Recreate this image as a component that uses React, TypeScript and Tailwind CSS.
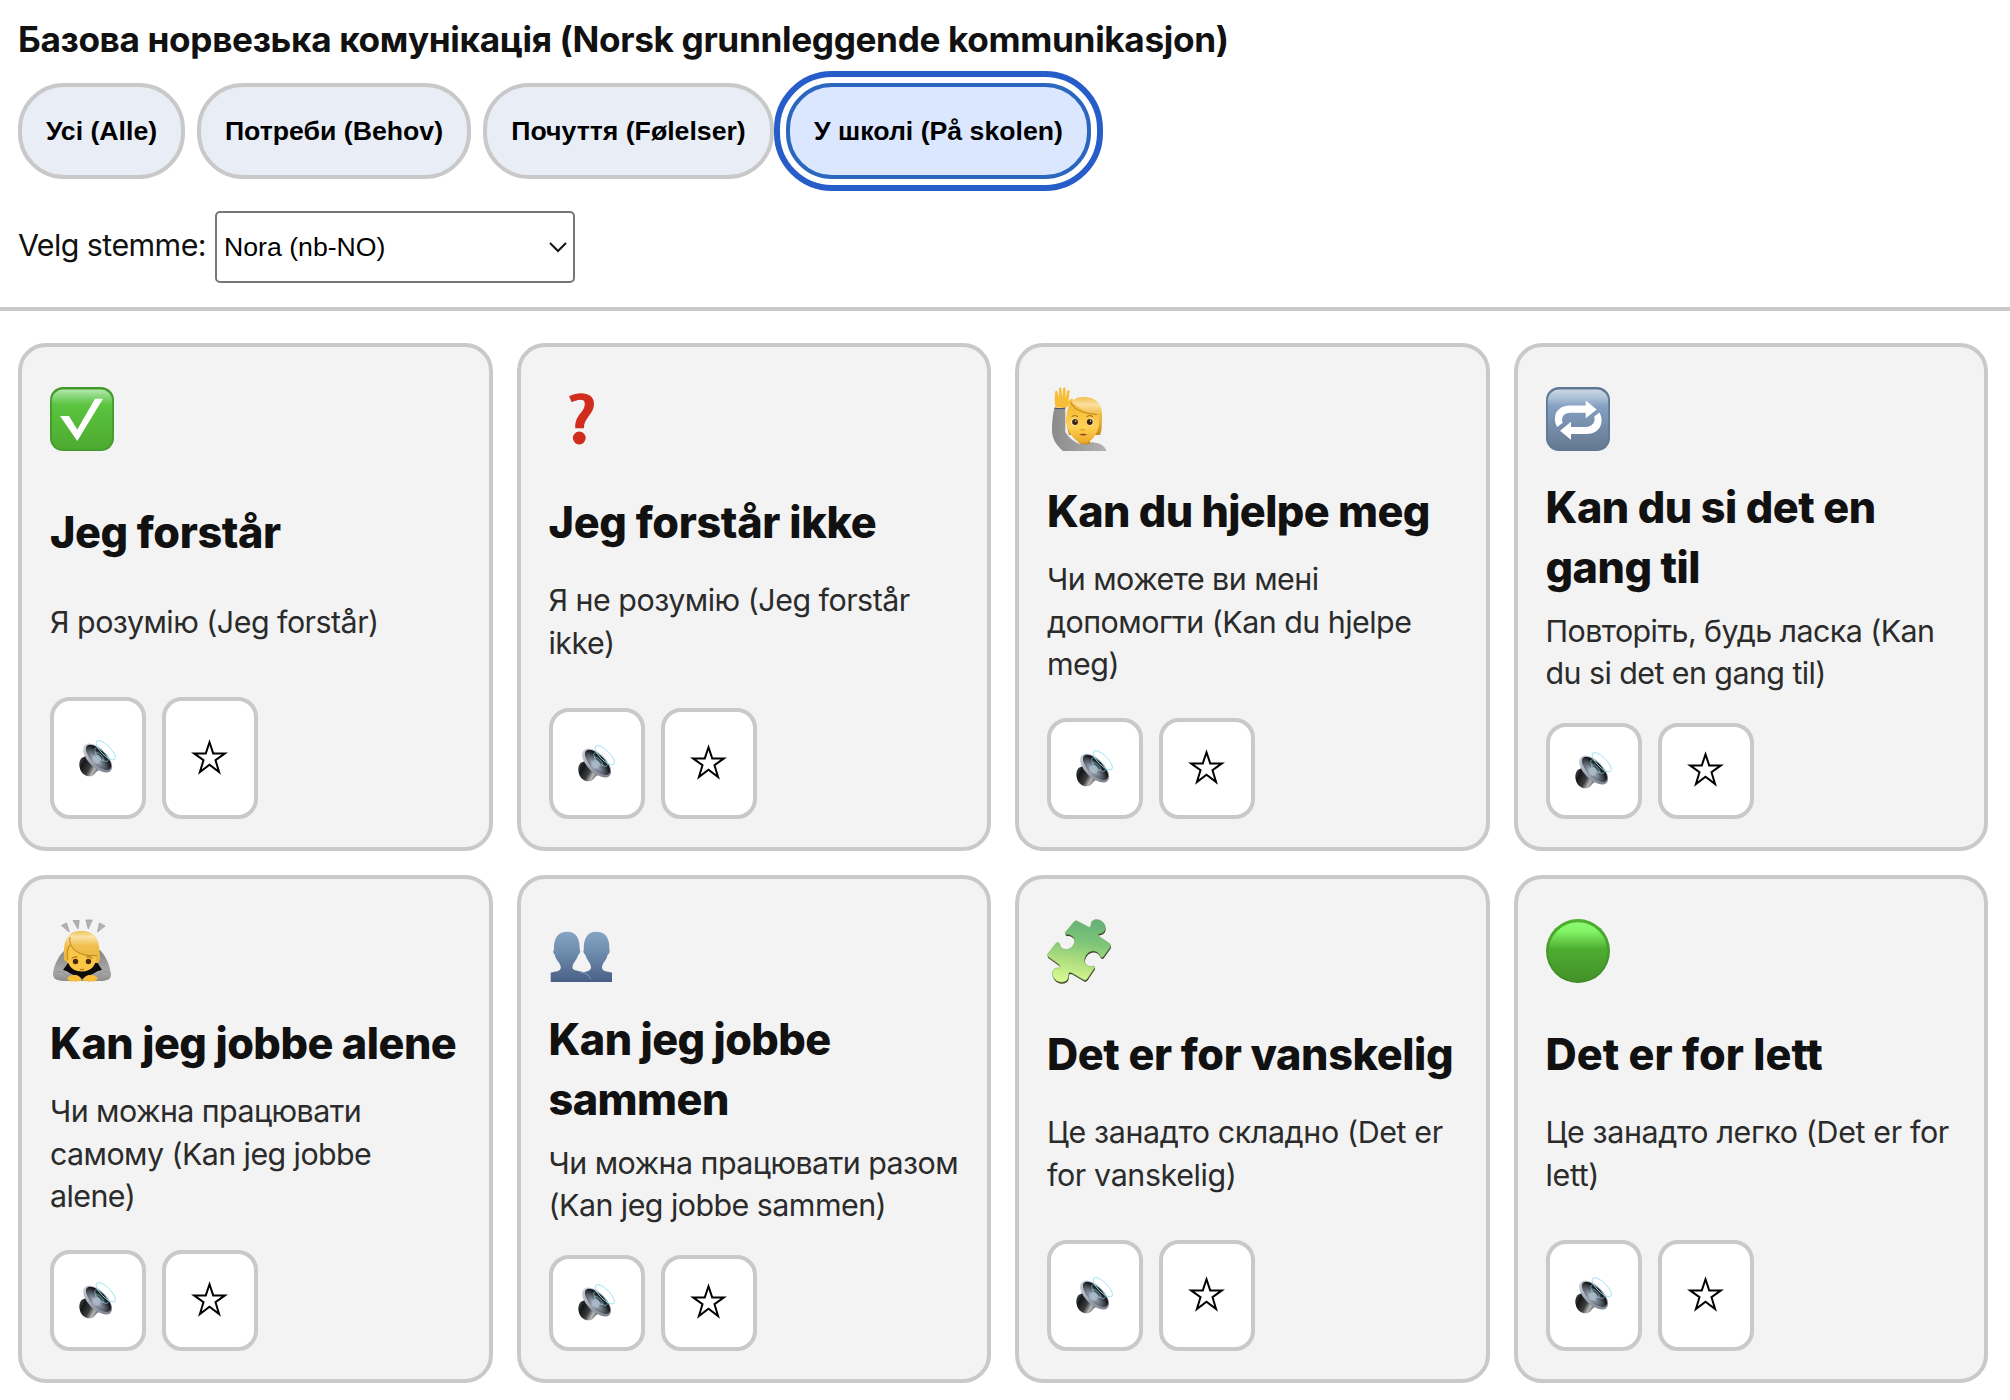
import React from "react";

const CheckIcon = () => (
  <svg className="block h-16 w-16" viewBox="0 0 64 64">
    <defs>
      <linearGradient id="chk" x1="0" y1="0" x2="0" y2="1">
        <stop offset="0" stopColor="#b4e8ae" />
        <stop offset="0.12" stopColor="#86d67a" />
        <stop offset="0.26" stopColor="#5ac43e" />
        <stop offset="1" stopColor="#4daa30" />
      </linearGradient>
    </defs>
    <rect width="64" height="64" rx="13" fill="#429a2c" />
    <rect x="1.8" y="2.4" width="60.4" height="60" rx="11.5" fill="url(#chk)" />
    <path d="M10 29h9l8.3 13.5L45 11.7h8L27.300 54z" fill="#fff" />
  </svg>
);

const QuestionIcon = () => (
  <svg className="block h-16 w-16" viewBox="0 0 64 64">
    <path
      d="M20 9.300C31 3.500 45 5.500 45 16.800C45 27.500 34.300 31.500 35 41.300H26.300C25.500 27.500 35.800 26 35.800 16.500C35.800 11.500 29 12.200 22.700 15.300Z"
      fill="#d12d1f"
    />
    <circle cx="30.300" cy="51" r="6.400" fill="#d12d1f" />
  </svg>
);

const RaiseHandIcon = () => (
  <svg className="block h-16 w-16" viewBox="0 0 64 64">
    <defs>
      <linearGradient id="rhArm" x1="0" y1="0" x2="1" y2="0">
        <stop offset="0" stopColor="#8b8b8b" />
        <stop offset="1" stopColor="#b2b2b2" />
      </linearGradient>
      <linearGradient id="rhHair" x1="0" y1="0" x2="0" y2="1">
        <stop offset="0" stopColor="#f0c04c" />
        <stop offset="0.2" stopColor="#fbe0a0" />
        <stop offset="0.45" stopColor="#f2bf49" />
        <stop offset="1" stopColor="#c98a1d" />
      </linearGradient>
      <linearGradient id="rhFace" x1="0" y1="0" x2="0" y2="1">
        <stop offset="0" stopColor="#f2b52f" />
        <stop offset="0.6" stopColor="#ffd255" />
        <stop offset="1" stopColor="#e9a524" />
      </linearGradient>
    </defs>
    <path d="M20 40C19 22 22 10 36 10C51 10 56 19 55 30C54.500 37 55.500 43 53 48H22Z" fill="url(#rhHair)" />
    <path d="M7.500 21H18.300V45C21 50 26 54 32 57C40 54 57 54 59.500 64H16C9 58 5 51 5 44C5 35 6 26 7.500 21Z" fill="url(#rhArm)" />
    <path d="M31 50h12v6.500q-6 2.500-12-1z" fill="#c98a1d" />
    <path d="M19.500 29C20 22 23 16 25 15.500C33 22 43 27 51 27.500C53.500 33 52.500 41 48.500 47.500C45 53.500 40.500 56.500 37 56.500C32 56.500 25.500 52 21.500 43C18.500 37 18.500 33 19.500 29Z" fill="url(#rhFace)" />
    <path d="M24 15C25 22 36 26.500 50 27.500" fill="none" stroke="#b87a18" strokeWidth="0.900" />
    <path d="M8.500 20.500C7.500 15 7.600 9 8.300 4.500C9 3 10.500 4 10.600 5.500L11.800 10.500L12 1.500C12.400 0 14 0 14.400 1.500L15 10L16.300 1C17 0 18.500 0.500 18.600 2L18.500 10.500L20.500 3.500C21.500 2 23 3.500 22.600 5L21.500 14C23 12.500 25 11 26 12C25.500 15 22 19 18 21Z" fill="#f8bd36" />
    <ellipse cx="27.500" cy="35" rx="3.200" ry="3.500" fill="#fff" />
    <ellipse cx="43.200" cy="35" rx="3.200" ry="3.500" fill="#fff" />
    <circle cx="28" cy="35" r="2.900" fill="#3b210b" />
    <circle cx="42.800" cy="35" r="2.900" fill="#3b210b" />
    <circle cx="28.700" cy="34" r="0.700" fill="#fff" />
    <circle cx="43.500" cy="34" r="0.700" fill="#fff" />
    <path d="M24.500 29.500q3-2 6.500 0M39.500 29.500q3.500-2 6.500 0" fill="none" stroke="#9a6512" strokeWidth="1" />
    <path d="M33.700 42.500q2 1.300 4 0" fill="none" stroke="#d18f1e" strokeWidth="1" />
    <path d="M32 47.300q4 -1.200 8.300 0q-4 2.600-8.300 0z" fill="#8b4410" />
    <path d="M7.500 21q5.500 1.500 10.800 0" fill="none" stroke="#4b5160" strokeWidth="1.200" />
  </svg>
);

const RepeatIcon = () => (
  <svg className="block h-16 w-16" viewBox="0 0 64 64">
    <defs>
      <linearGradient id="rep" x1="0" y1="0" x2="0" y2="1">
        <stop offset="0" stopColor="#cbd8e4" />
        <stop offset="0.14" stopColor="#adc1d6" />
        <stop offset="0.28" stopColor="#85a0c1" />
        <stop offset="1" stopColor="#647891" />
      </linearGradient>
    </defs>
    <rect width="64" height="64" rx="13" fill="#5f7894" />
    <rect x="1.800" y="2.400" width="60.400" height="60" rx="11.500" fill="url(#rep)" />
    <path d="M11.300 40C6 31 9.500 18.600 24 18.600H39.700V13.400L50.700 22.400L39.700 31.300V25.700H25C17.500 25.700 14.800 30.500 16.700 35.800Z" fill="#fff" />
    <path d="M53.500 25.500C58.500 34.500 54.500 47 40.500 47H25V52.700L14 43.700L25 34.800V40H39.500C46.500 40 49.700 35 48.300 29.600Z" fill="#fff" />
  </svg>
);

const BowIcon = () => (
  <svg className="block h-16 w-16" viewBox="0 0 64 64">
    <defs>
      <linearGradient id="bwHair" x1="0" y1="0" x2="0" y2="1">
        <stop offset="0" stopColor="#ecc258" />
        <stop offset="0.18" stopColor="#fbe3a6" />
        <stop offset="0.45" stopColor="#f0c04f" />
        <stop offset="1" stopColor="#e8b43c" />
      </linearGradient>
      <linearGradient id="bwArm" x1="0" y1="0" x2="0" y2="1">
        <stop offset="0" stopColor="#858585" />
        <stop offset="0.700" stopColor="#a9a9a9" />
        <stop offset="1" stopColor="#8c8c8c" />
      </linearGradient>
    </defs>
    <path d="M11.500 6.500l5-2.500 2.800 9zM23 1.500h6.200l-1.200 8.500zM36 1h6.200l-4 9zM49.500 4l5.500 3-7.500 6z" fill="#b3b3b3" stroke="#8f8f8f" strokeWidth="0.600" />
    <path d="M15 31C8 37 3 48 3 55C3 60 7 62 15 62H50C58 62 61 60 61 55C60 47 56 37 50 31Z" fill="url(#bwArm)" />
    <path d="M18 44L13 51C18 52 20 55 26 57L32 60L38 57C44 55 46 52 52 51L47 43Z" fill="#0d0a09" />
    <path d="M14 41C13 22 16 12 31.500 12C46 12 49.500 22 49.500 33C50 38 51 41 48 44H18Z" fill="url(#bwHair)" />
    <path d="M17.500 40C17 34 19 31 20 27C26 36 38 38 46 37C47 46 41 52.500 32 52.500C24 52.500 18 48 17.500 40Z" fill="#f9c645" />
    <path d="M20 18C18 30 30 38 47 36.500M20 26C16 31 17.500 38 18 41" fill="none" stroke="#b57c1c" strokeWidth="0.900" />
    <circle cx="25.500" cy="42.500" r="2.700" fill="#4a2a0e" />
    <circle cx="38.500" cy="42.500" r="2.700" fill="#4a2a0e" />
    <path d="M21.500 39.500q3-2.500 6-1.500M36.500 38q4-1 6 1.500" fill="none" stroke="#9a6512" strokeWidth="1" />
    <path d="M30 50q2 1.800 4 0" fill="none" stroke="#b87a18" strokeWidth="1.200" />
    <path d="M17 60C18 57 22 55.500 26 56C29 56.500 31.500 59 31.500 61.500L29 62.500L27 61.500L26 63.300L23.500 61.800L22 63Z" fill="#f8bd36" />
    <path d="M48 60C47 57 43 55.500 39 56C36 56.500 33 59 33 61.500L35.500 62.500L37.500 61.500L39 63.300L41.500 61.800L43 63Z" fill="#f8bd36" />
    <path d="M5 54C9 51 14 53 17 57M60 54C56 51 51 53 48 57" fill="none" stroke="#8a8a8a" strokeWidth="0.800" />
  </svg>
);

const PeopleIcon = () => (
  <svg className="block h-16 w-16" viewBox="0 0 64 64">
    <defs>
      <linearGradient id="ppl" gradientUnits="userSpaceOnUse" x1="0" y1="12" x2="0" y2="63">
        <stop offset="0" stopColor="#86a6c6" />
        <stop offset="0.450" stopColor="#6c8aab" />
        <stop offset="1" stopColor="#485f85" />
      </linearGradient>
    </defs>
    <path
      d="M63 63V53.500C58 52.500 53 52.500 53 48.500C53 44 57.500 41.500 58.500 36C61 34 61 31.500 60.300 30.500C61 20 57 12.800 47.200 12.800C38 12.800 34.500 20 34.800 30.500C33.800 32 34.500 34.500 36.500 36C38 41.500 42 44 42 48.500C42 52 37 52.500 34 53.500C40 56 41 59 42 63Z"
      fill="url(#ppl)"
    />
    <path
      d="M1.700 63V53.500C6.500 52.500 11.800 52.500 11.800 48.500C11.800 44 7 41.500 5.800 36C4 34 3.800 31.500 5 30.500C4.500 20 8.500 12.800 18.200 12.800C27.500 12.800 31 20 30.700 30.500C31.800 32 31.200 34.500 29.200 36C27.500 41.500 23.500 44 23.500 48.500C24 54 40 50 42 60L42.500 63Z"
      fill="url(#ppl)"
    />
    <path d="M31 53C37 54 40 56 41.500 60" fill="none" stroke="#84a9c4" strokeWidth="0.900" />
  </svg>
);

const PUZZLE =
  "M27.300 2.500Q29 1 31 2.500L41.500 8C44 9 44 6 44 4.500C45 -0.500 53 -1 57 4.500C60 10 57 14 53.500 14.500C50 15 51.500 17 53 18L62.500 24.500Q64.500 26 63 28.500L56.500 37.500Q55 39.500 53.500 37.500C51 31 44 30.500 40.500 34.500C35.500 40 37 46.500 43.500 47.500C46 47 48.500 46.500 47.500 49L40.500 59.500Q38.500 62.500 36 60.500L25 54C22 52.500 21.500 54 21.500 57C21.500 63.500 13 65.500 7.500 60C4 55.500 5 49.500 10 49C13 49 13.500 47.500 12 45.500L1.500 38Q-0.500 36.500 1 34.500L8.500 25Q11 21.500 12.500 25C13 31 21 32 25 28C29.500 23 28.500 17 21.500 15.500C18 16 17.500 14 19 12.500Z";

const PuzzleIcon = () => (
  <svg className="block h-16 w-16 overflow-visible" viewBox="0 0 64 64">
    <defs>
      <linearGradient id="puz" x1="0.550" y1="0" x2="0.400" y2="1">
        <stop offset="0" stopColor="#67b078" />
        <stop offset="0.350" stopColor="#7fc578" />
        <stop offset="0.700" stopColor="#b4e07f" />
        <stop offset="1" stopColor="#d8fb92" />
      </linearGradient>
    </defs>
    <path d={PUZZLE} fill="#3c3a24" transform="translate(0.400 1.600)" />
    <path d={PUZZLE} fill="url(#puz)" stroke="#73ab5e" strokeWidth="0.500" />
  </svg>
);

const CircleIcon = () => (
  <svg className="block h-16 w-16" viewBox="0 0 64 64">
    <defs>
      <linearGradient id="cir" x1="0" y1="0" x2="0" y2="1">
        <stop offset="0" stopColor="#8dfb70" />
        <stop offset="0.150" stopColor="#83f466" />
        <stop offset="0.450" stopColor="#4dad30" />
        <stop offset="1" stopColor="#439129" />
      </linearGradient>
      <linearGradient id="cirRim" x1="0" y1="0" x2="0" y2="1">
        <stop offset="0" stopColor="#4fb032" />
        <stop offset="1" stopColor="#3b8625" />
      </linearGradient>
    </defs>
    <circle cx="32" cy="32" r="32" fill="url(#cirRim)" />
    <ellipse cx="32" cy="33" rx="29.500" ry="29.800" fill="url(#cir)" />
  </svg>
);

const SpeakerIcon = () => (
  <svg className="mr-px block h-[37px] w-[37px] overflow-visible" viewBox="0 0 37 37">
    <defs>
      <linearGradient id="spB" x1="0" y1="0" x2="1" y2="0.500">
        <stop offset="0" stopColor="#5a5b5e" />
        <stop offset="0.300" stopColor="#151617" />
        <stop offset="0.600" stopColor="#3b3c3e" />
        <stop offset="0.800" stopColor="#b8b8b8" />
        <stop offset="1" stopColor="#4a4a4a" />
      </linearGradient>
      <linearGradient id="spR" x1="0" y1="0" x2="1" y2="0">
        <stop offset="0" stopColor="#c9cedb" />
        <stop offset="0.500" stopColor="#9ba0ad" />
        <stop offset="1" stopColor="#7c818f" />
      </linearGradient>
      <radialGradient id="spC" cx="0.500" cy="0.750" r="0.600">
        <stop offset="0" stopColor="#c0cad8" />
        <stop offset="0.450" stopColor="#6e7783" />
        <stop offset="1" stopColor="#17191c" />
      </radialGradient>
    </defs>
    <path d="M2.500 18C0 21-0.200 25.500 1 28.500C2 33 6 36.300 10.500 36.300C15 36.500 16 32.500 19 30.500L23 29L9 15Z" fill="url(#spB)" />
    <ellipse cx="18.600" cy="18.100" rx="18.200" ry="9.300" transform="rotate(45 18.600 18.100)" fill="url(#spR)" />
    <ellipse cx="19.500" cy="17.300" rx="16.200" ry="7.300" transform="rotate(45 19.500 17.300)" fill="url(#spC)" />
    <circle cx="17.500" cy="19.500" r="4.300" fill="#adb9c9" opacity="0.750" />
    <g fill="none" stroke="#9be2f0" strokeWidth="0.900">
      <ellipse cx="26.800" cy="10.200" rx="12.800" ry="4.800" transform="rotate(45 26.800 10.200)" />
      <ellipse cx="22.500" cy="14.600" rx="9" ry="3.600" transform="rotate(45 22.500 14.600)" opacity="0.600" />
      <ellipse cx="20.500" cy="16.500" rx="5.500" ry="2.200" transform="rotate(45 20.500 16.500)" opacity="0.450" />
    </g>
  </svg>
);

const StarIcon = () => (
  <svg className="mr-px mb-0.5 block h-[37px] w-[37px]" viewBox="0 0 37 37">
    <path
      d="M18.500 3.300L22.200 14.400H34L24.500 21.200L28.100 33L18.500 25.800L8.900 33L12.500 21.200L3 14.400H14.800Z"
      fill="none"
      stroke="#000"
      strokeWidth="2"
      strokeMiterlimit="10"
    />
  </svg>
);

type Card = {
  icon: React.ReactNode;
  title: string[];
  text: string[];
  titleTracking: string;
  textTracking: string;
};

const cards: Card[] = [
  {
    icon: <CheckIcon />,
    title: ["Jeg forstår"],
    text: ["Я розумію (Jeg forstår)"],
    titleTracking: "tracking-[-0.4px]",
    textTracking: "tracking-[-0.52px]",
  },
  {
    icon: <QuestionIcon />,
    title: ["Jeg forstår ikke"],
    text: ["Я не розумію (Jeg forstår", "ikke)"],
    titleTracking: "tracking-[-0.33px]",
    textTracking: "tracking-[-0.5px]",
  },
  {
    icon: <RaiseHandIcon />,
    title: ["Kan du hjelpe meg"],
    text: ["Чи можете ви мені", "допомогти (Kan du hjelpe", "meg)"],
    titleTracking: "tracking-[-0.6px]",
    textTracking: "tracking-[-0.52px]",
  },
  {
    icon: <RepeatIcon />,
    title: ["Kan du si det en", "gang til"],
    text: ["Повторіть, будь ласка (Kan", "du si det en gang til)"],
    titleTracking: "tracking-[-0.48px]",
    textTracking: "tracking-[-0.56px]",
  },
  {
    icon: <BowIcon />,
    title: ["Kan jeg jobbe alene"],
    text: ["Чи можна працювати", "самому (Kan jeg jobbe", "alene)"],
    titleTracking: "tracking-[-0.5px]",
    textTracking: "tracking-[-0.57px]",
  },
  {
    icon: <PeopleIcon />,
    title: ["Kan jeg jobbe", "sammen"],
    text: ["Чи можна працювати разом", "(Kan jeg jobbe sammen)"],
    titleTracking: "tracking-[-0.55px]",
    textTracking: "tracking-[-0.54px]",
  },
  {
    icon: <PuzzleIcon />,
    title: ["Det er for vanskelig"],
    text: ["Це занадто складно (Det er", "for vanskelig)"],
    titleTracking: "tracking-[-0.4px]",
    textTracking: "tracking-[-0.37px]",
  },
  {
    icon: <CircleIcon />,
    title: ["Det er for lett"],
    text: ["Це занадто легко (Det er for", "lett)"],
    titleTracking: "tracking-[0px]",
    textTracking: "tracking-[-0.35px]",
  },
];

const filters = [
  { label: "Усі (Alle)", width: "w-[167px]", active: false },
  { label: "Потреби (Behov)", width: "w-[274px]", active: false },
  { label: "Почуття (Følelser)", width: "w-[291px]", active: false },
  { label: "У школі (På skolen)", width: "w-[305px]", active: true },
];

const actionButton =
  "flex h-full w-24 items-center justify-center rounded-[20px] border-4 border-[#c9c9c9] bg-white";

function PhraseCard({ icon, title, text, titleTracking, textTracking }: Card) {
  return (
    <article className="grid h-[508px] grid-rows-[auto_auto_auto_auto] content-stretch gap-3 rounded-[28px] border-4 border-[#c9c9c9] bg-[#f3f3f3] p-7">
      <div className="h-[89.6px] pt-3">{icon}</div>
      <h2 className={`text-[43.2px] leading-[60.5px] font-extrabold whitespace-nowrap text-[#111] ${titleTracking}`}>
        {title.map((line) => (
          <span key={line} className="block">{line}</span>
        ))}
      </h2>
      <p className={`text-[30.4px] leading-[42.56px] whitespace-nowrap text-[#2b2b2b] ${textTracking}`}>
        {text.map((line) => (
          <span key={line} className="block">{line}</span>
        ))}
      </p>
      <div className="mt-4 flex min-h-24 gap-4">
        <button className={actionButton}><SpeakerIcon /></button>
        <button className={actionButton}><StarIcon /></button>
      </div>
    </article>
  );
}

export default function App() {
  return (
    <div className="h-[1400px] w-[2010px] overflow-hidden bg-white font-['Inter',sans-serif] text-[#111]">
      <header className="h-[311px] border-b-4 border-[#c9c9c9] px-[18px] pt-[15px]">
        <h1 className="h-[68px] text-[35.2px] leading-[49px] font-bold tracking-[-0.36px] whitespace-nowrap">
          Базова норвезька комунікація (Norsk grunnleggende kommunikasjon)
        </h1>
        <nav className="flex gap-3 font-['Liberation_Sans',Arial,sans-serif] text-[26.67px] font-bold text-black">
          {filters.map((f) => (
            <button
              key={f.label}
              className={`h-24 rounded-[46px] border-4 whitespace-nowrap ${f.width} ${
                f.active
                  ? "border-[#2b66bf] bg-[#dbe7ff] outline-6 outline-offset-6 outline-[#265dc9]"
                  : "border-[#c9c9c9] bg-[#e9eef6]"
              }`}
            >
              {f.label}
            </button>
          ))}
        </nav>
        <div className="mt-8 flex items-center">
          <span className="w-[197px] pb-0.5 text-[30.4px] tracking-[-0.57px] whitespace-nowrap">Velg stemme:</span>
          <div className="flex h-[72px] w-[360px] items-center justify-between rounded-[5px] border-2 border-[#767676] bg-white pr-[5px] pl-[7px] font-['Liberation_Sans',Arial,sans-serif] text-[26.67px] text-black">
            <span>Nora (nb-NO)</span>
            <svg className="h-5 w-5" viewBox="0 0 20 20" fill="none" stroke="#111" strokeWidth="2">
              <path d="M2 6l8 8 8-8" />
            </svg>
          </div>
        </div>
      </header>
      <main className="grid grid-cols-[repeat(4,474.5px)] gap-6 px-[18px] pt-8">
        {cards.map((c) => (
          <PhraseCard key={c.title.join(" ")} {...c} />
        ))}
      </main>
    </div>
  );
}
